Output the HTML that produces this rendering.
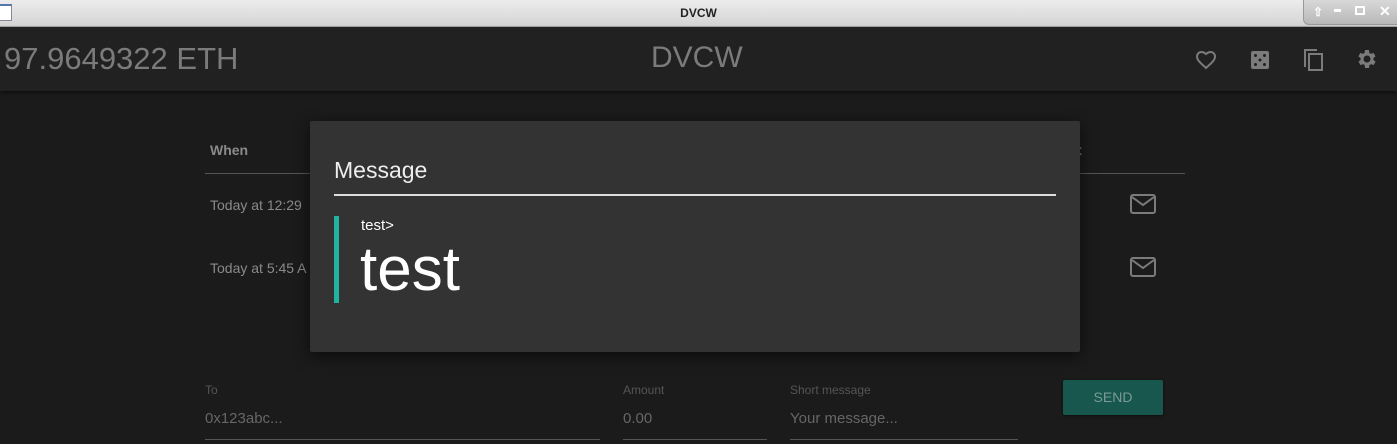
<!DOCTYPE html>
<html><head><style>
*{margin:0;padding:0;box-sizing:border-box}
body{width:1397px;height:444px;overflow:hidden;background:#1b1b1b;font-family:"Liberation Sans",sans-serif;position:relative}
.abs{position:absolute}
.tb{left:0;top:0;width:1397px;height:27px;background:linear-gradient(#ececec,#d4d4d4);border-bottom:1px solid #aaa}
.hdr{left:0;top:27px;width:1397px;height:64px;background:#212121;box-shadow:0 2px 4px rgba(0,0,0,.5)}
.t{color:#8a8a8a;font-size:14px}
</style></head><body>
<div class="abs tb">
 <div class="abs" style="left:-2px;top:4px;width:14px;height:17px;background:#fff;border:1px solid #889;border-top:2px solid #57a"></div>
 <div class="abs" style="left:0;width:1397px;top:6px;text-align:center;font-size:12px;font-weight:bold;color:#222">DVCW</div>
 <div class="abs" style="left:1303px;top:0;width:94px;height:25px;background:linear-gradient(#d8d8d8,#b8b8b8);border-left:1px solid #999;border-bottom:1px solid #999;border-radius:0 0 0 6px;color:#fff;font-size:12px;font-weight:bold">
  <span class="abs" style="left:9px;top:5px">&#8679;</span>
  <span class="abs" style="left:30px;top:9px;width:7px;height:3px;background:#fff"></span>
  <span class="abs" style="left:51px;top:6px;width:10px;height:9px;border:2px solid #fff"></span>
  <span class="abs" style="left:75px;top:3px;font-size:14px">&#10005;</span>
 </div>
</div>
<div class="abs hdr">
 <div class="abs" style="left:4px;top:14px;font-size:31px;color:#7b7b7b;letter-spacing:0px">97.9649322 ETH</div>
 <div class="abs" style="left:651px;top:14px;font-size:30px;color:#7b7b7b">DVCW</div>
 <svg class="abs" style="left:1194px;top:21px" width="24" height="24" viewBox="0 0 24 24"><path d="M12 20l-1.2-1.1C6 14.6 3 11.9 3 8.5 3 6 5 4 7.5 4c1.5 0 3 .7 4.5 2 1.5-1.3 3-2 4.5-2C19 4 21 6 21 8.5c0 3.4-3 6.1-7.8 10.4z" fill="none" stroke="#7b7b7b" stroke-width="2"/></svg>
 <svg class="abs" style="left:1250px;top:23px" width="20" height="20" viewBox="0 0 20 20"><rect x="1" y="1" width="18" height="18" rx="2" fill="#7b7b7b"/><g fill="#212121"><circle cx="5.5" cy="5.5" r="1.5"/><circle cx="14.5" cy="5.5" r="1.5"/><circle cx="10" cy="10" r="1.5"/><circle cx="5.5" cy="14.5" r="1.5"/><circle cx="14.5" cy="14.5" r="1.5"/></g></svg>
 <svg class="abs" style="left:1302px;top:20px" width="24" height="26" viewBox="0 0 24 26"><path d="M3 20V3h12" fill="none" stroke="#7b7b7b" stroke-width="2"/><rect x="7" y="7" width="13" height="16" fill="none" stroke="#7b7b7b" stroke-width="2"/></svg>
 <svg class="abs" style="left:1355px;top:20px" width="24" height="24" viewBox="0 0 24 24"><path fill="#7b7b7b" d="M19.4 13a7.5 7.5 0 000-2l2.1-1.6-2-3.5-2.5 1a7 7 0 00-1.7-1L15 3h-4l-.4 2.9a7 7 0 00-1.7 1l-2.5-1-2 3.5L6.6 11a7.5 7.5 0 000 2l-2.1 1.6 2 3.5 2.5-1a7 7 0 001.7 1L11 21h4l.4-2.9a7 7 0 001.7-1l2.5 1 2-3.5zM13 15.5a3.5 3.5 0 110-7 3.5 3.5 0 010 7z" transform="translate(-1 0)"/></svg>
</div>
<div class="abs t" style="left:210px;top:142px;font-weight:bold">When</div>
<div class="abs t" style="left:1077px;top:142px;font-weight:bold">t</div>
<div class="abs" style="left:205px;top:173px;width:980px;height:1px;background:#555"></div>
<div class="abs t" style="left:210px;top:197px">Today at 12:29</div>
<div class="abs t" style="left:210px;top:260px">Today at 5:45 A</div>
<svg class="abs" style="left:1130px;top:194px" width="26" height="20" viewBox="0 0 26 20"><rect x="1" y="1" width="24" height="18" rx="2" fill="none" stroke="#7b7b7b" stroke-width="2"/><path d="M2 3l11 8 11-8" fill="none" stroke="#7b7b7b" stroke-width="2"/></svg>
<svg class="abs" style="left:1130px;top:257px" width="26" height="20" viewBox="0 0 26 20"><rect x="1" y="1" width="24" height="18" rx="2" fill="none" stroke="#7b7b7b" stroke-width="2"/><path d="M2 3l11 8 11-8" fill="none" stroke="#7b7b7b" stroke-width="2"/></svg>
<div class="abs" style="left:310px;top:121px;width:770px;height:231px;background:#333;border-radius:2px;box-shadow:0 4px 16px rgba(0,0,0,.6)">
 <div class="abs" style="left:24px;top:36px;font-size:23px;color:#eee;font-weight:300">Message</div>
 <div class="abs" style="left:24px;top:73px;width:722px;height:2px;background:#ddd"></div>
 <div class="abs" style="left:24px;top:95px;width:5px;height:87px;background:#1fb3a0"></div>
 <div class="abs" style="left:51px;top:96px;font-size:15px;color:#fff">test&gt;</div>
 <div class="abs" style="left:50px;top:114px;font-size:62px;color:#fff;line-height:70px">test</div>
</div>
<div class="abs" style="left:205px;top:383px;font-size:12px;color:#555">To</div>
<div class="abs" style="left:205px;top:410px;font-size:15px;color:#666">0x123abc...</div>
<div class="abs" style="left:205px;top:439px;width:395px;height:1px;background:#555"></div>
<div class="abs" style="left:623px;top:383px;font-size:12px;color:#555">Amount</div>
<div class="abs" style="left:623px;top:410px;font-size:15px;color:#666">0.00</div>
<div class="abs" style="left:623px;top:439px;width:144px;height:1px;background:#555"></div>
<div class="abs" style="left:790px;top:383px;font-size:12px;color:#555">Short message</div>
<div class="abs" style="left:790px;top:410px;font-size:15px;color:#666">Your message...</div>
<div class="abs" style="left:790px;top:439px;width:228px;height:1px;background:#555"></div>
<div class="abs" style="left:1063px;top:380px;width:100px;height:35px;background:#17574e;border-radius:2px;color:#7a9a95;font-size:14px;text-align:center;line-height:35px;box-shadow:0 1px 3px rgba(0,0,0,.5)">SEND</div>
</body></html>
